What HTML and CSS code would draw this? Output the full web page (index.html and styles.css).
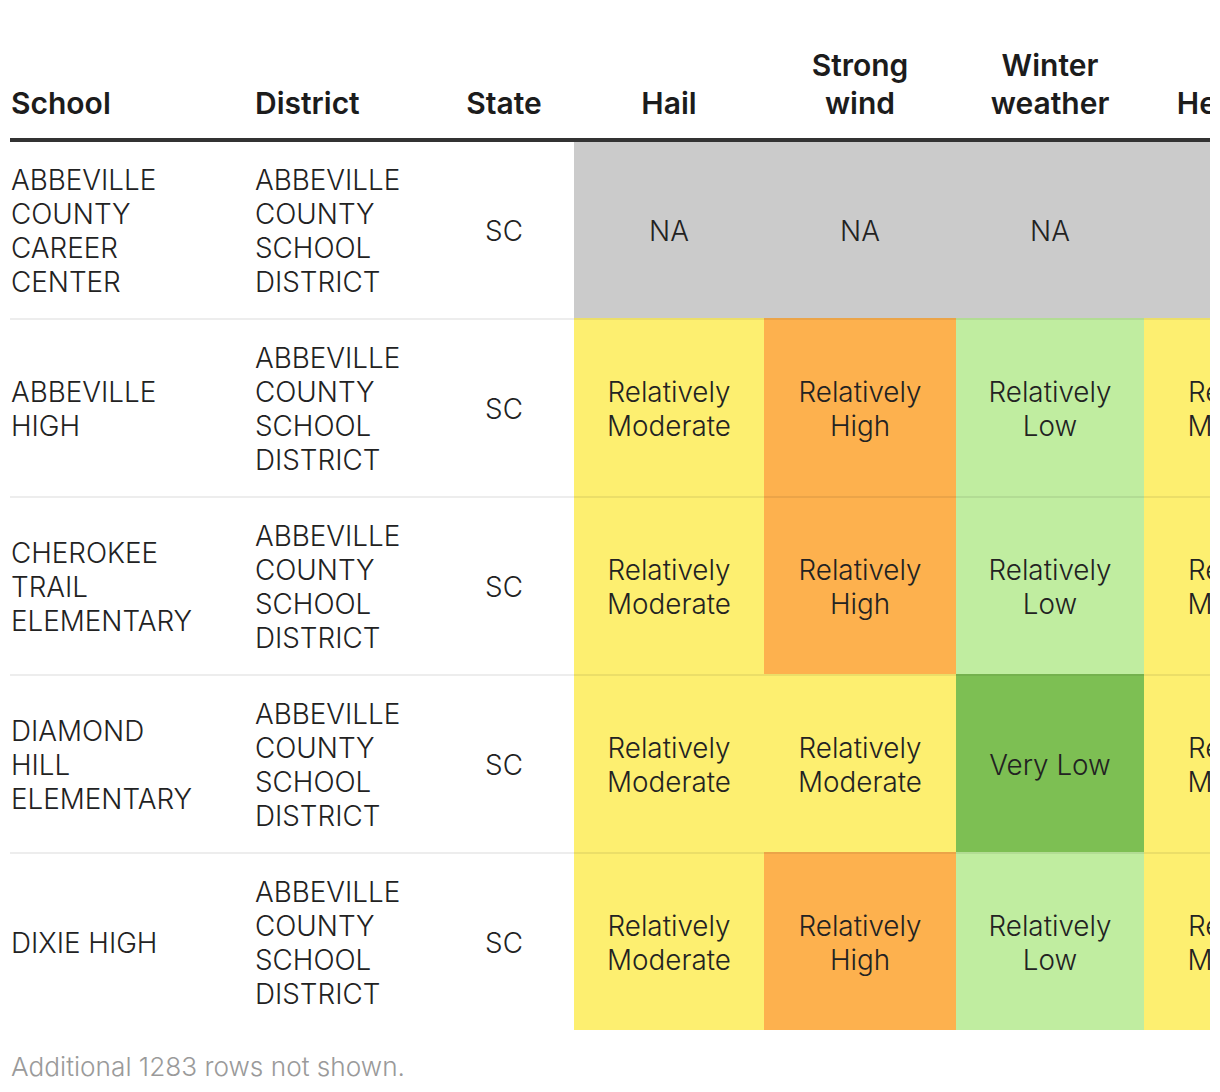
FILE: index.html
```html
<!DOCTYPE html>
<html lang="en">
<head>
<meta charset="utf-8">
<title>School hazard risk</title>
<link rel="stylesheet" href="styles.css">
</head>
<body>
<div class="wrap">
  <table class="risk">
    <colgroup>
      <col class="c-school"><col class="c-district"><col class="c-state">
      <col class="c-hail"><col class="c-wind"><col class="c-winter"><col class="c-heat">
    </colgroup>
    <thead>
      <tr>
        <th class="school">School</th>
        <th class="district">District</th>
        <th>State</th>
        <th>Hail</th>
        <th>Strong wind</th>
        <th>Winter weather</th>
        <th class="nowrap">Heatwave</th>
      </tr>
    </thead>
    <tbody>
      <tr>
        <td class="school">ABBEVILLE COUNTY CAREER CENTER</td>
        <td class="district">ABBEVILLE COUNTY SCHOOL DISTRICT</td>
        <td>SC</td>
        <td class="na">NA</td>
        <td class="na">NA</td>
        <td class="na">NA</td>
        <td class="na">NA</td>
      </tr>
      <tr>
        <td class="school">ABBEVILLE HIGH</td>
        <td class="district">ABBEVILLE COUNTY SCHOOL DISTRICT</td>
        <td>SC</td>
        <td class="mod">Relatively Moderate</td>
        <td class="high">Relatively High</td>
        <td class="low">Relatively Low</td>
        <td class="mod">Relatively Moderate</td>
      </tr>
      <tr>
        <td class="school">CHEROKEE TRAIL ELEMENTARY</td>
        <td class="district">ABBEVILLE COUNTY SCHOOL DISTRICT</td>
        <td>SC</td>
        <td class="mod">Relatively Moderate</td>
        <td class="high">Relatively High</td>
        <td class="low">Relatively Low</td>
        <td class="mod">Relatively Moderate</td>
      </tr>
      <tr>
        <td class="school">DIAMOND HILL ELEMENTARY</td>
        <td class="district">ABBEVILLE COUNTY SCHOOL DISTRICT</td>
        <td>SC</td>
        <td class="mod">Relatively Moderate</td>
        <td class="mod">Relatively Moderate</td>
        <td class="vlow">Very Low</td>
        <td class="mod">Relatively Moderate</td>
      </tr>
      <tr>
        <td class="school">DIXIE HIGH</td>
        <td class="district">ABBEVILLE COUNTY SCHOOL DISTRICT</td>
        <td>SC</td>
        <td class="mod">Relatively Moderate</td>
        <td class="high">Relatively High</td>
        <td class="low">Relatively Low</td>
        <td class="mod">Relatively Moderate</td>
      </tr>
    </tbody>
  </table>
  <p class="note">Additional 1283 rows not shown.</p>
</div>
</body>
</html>
```

FILE: styles.css
```css
html, body {
  margin: 0;
  padding: 0;
  background: #ffffff;
}

body {
  font-family: Inter, "Noto Sans", sans-serif;
  color: #222222;
}

.wrap {
  margin: 0 10px;
  padding-top: 46px;
  overflow: hidden;
}

.risk {
  border-collapse: separate;
  border-spacing: 0;
  table-layout: fixed;
  width: 1345px;
}

.c-school { width: 244px; }
.c-district { width: 180px; }
.c-state { width: 140px; }
.c-hail { width: 190px; }
.c-wind { width: 192px; }
.c-winter { width: 188px; }
.c-heat { width: 211px; }

.risk th {
  font-weight: 600;
  font-size: 30px;
  line-height: 38px;
  color: #1c1c1c;
  text-align: center;
  vertical-align: bottom;
  padding: 0 10px 16px;
  border-bottom: 4px solid #333333;
}

.risk td {
  font-weight: 300;
  font-size: 27.8px;
  line-height: 34px;
  text-align: center;
  vertical-align: middle;
  padding: 21px 10px 19px;
  border-top: 2px solid rgba(0, 0, 0, 0.07);
}

.risk tbody tr:first-child td {
  border-top: none;
}

.risk .school,
.risk .district {
  text-align: left;
  padding-left: 1px;
}

.risk .school {
  padding-right: 50px;
}

.risk .district {
  padding-right: 20px;
}

.risk .nowrap {
  white-space: nowrap;
}

.na { background: #cbcbcb; }
.mod { background: #fdef70; }
.high { background: #fdb14e; }
.low { background: #c0eda0; }
.vlow { background: #7dbf53; }

.note {
  margin: 20px 0 0 1px;
  font-weight: 300;
  font-size: 26.2px;
  line-height: 34px;
  color: #9a9a9a;
}
```
